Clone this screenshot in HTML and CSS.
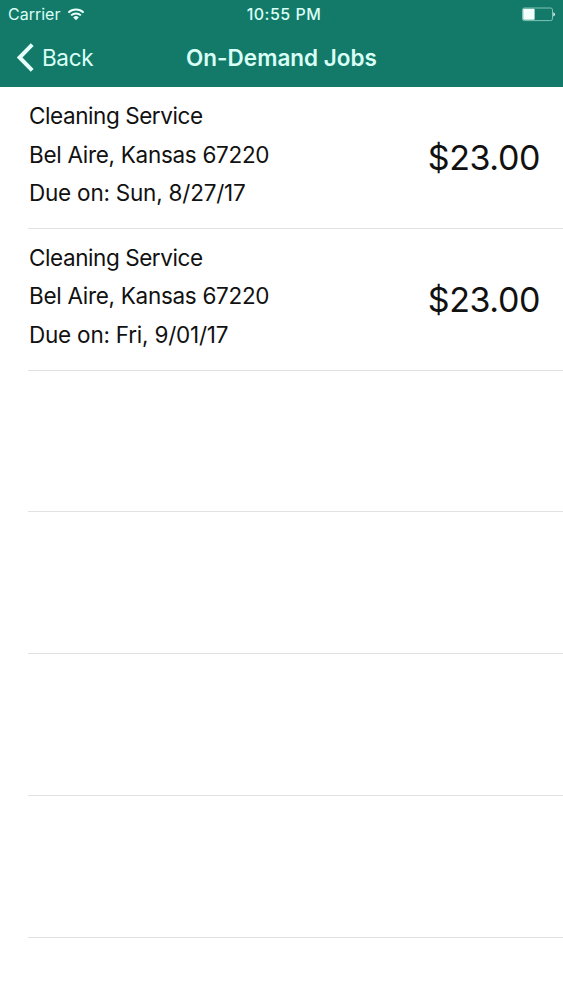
FILE: index.html
```
<!DOCTYPE html>
<html lang="en">
<head>
  <meta charset="utf-8">
  <title>On-Demand Jobs</title>
  <link rel="stylesheet" href="styles.css">
</head>
<body>
  <header class="header">
    <div class="status-bar">
      <div class="carrier">
        <span>Carrier</span>
        <svg class="wifi" width="18" height="13" viewBox="0 0 18 13">
          <path d="M1.4 4.6a11 11 0 0 1 15.2 0" />
          <path d="M4.1 7.4a7.1 7.1 0 0 1 9.8 0" />
          <path class="dot" d="M9 12.2L6.2 9.4a4.1 4.1 0 0 1 5.6 0z" />
        </svg>
      </div>
      <span class="time">10:55 PM</span>
      <svg class="battery" width="34" height="15" viewBox="0 0 34 15">
        <rect class="case" x="1.5" y="1" width="30" height="12.6" rx="1.8" />
        <rect class="charge" x="2.2" y="1.8" width="11.4" height="11" rx="0.8" />
        <path class="charge" d="M32.4 5.2q1.4 .4 1.4 2.1t-1.4 2.1z" />
      </svg>
    </div>
    <nav class="nav-bar">
      <a class="back" href="#">
        <svg width="18" height="29" viewBox="0 0 18 29">
          <path d="M16.2 1.7L3.6 14.5l12.6 12.8" />
        </svg>
        <span>Back</span>
      </a>
      <h1>On-Demand Jobs</h1>
    </nav>
  </header>

  <ul class="jobs">
    <li class="job">
      <div class="info">
        <p class="service">Cleaning Service</p>
        <p class="place">Bel Aire, Kansas 67220</p>
        <p class="due">Due on: Sun, 8/27/17</p>
      </div>
      <span class="price">$23.00</span>
    </li>
    <li class="job">
      <div class="info">
        <p class="service">Cleaning Service</p>
        <p class="place">Bel Aire, Kansas 67220</p>
        <p class="due">Due on: Fri, 9/01/17</p>
      </div>
      <span class="price">$23.00</span>
    </li>
    <li class="job"></li>
    <li class="job"></li>
    <li class="job"></li>
    <li class="job"></li>
  </ul>
</body>
</html>
```

FILE: styles.css
```
* {
  box-sizing: border-box;
}

body {
  margin: 0;
  background: #fff;
  color: #111;
  font-family: Inter, "Liberation Sans", sans-serif;
}

.header {
  height: 87px;
  background: #137a69;
  color: #d9fff6;
}

.status-bar {
  display: grid;
  grid-template-columns: 1fr auto 1fr;
  align-items: center;
  height: 28px;
  padding: 0 8px;
  font-size: 16px;
  line-height: 28px;
}

.carrier {
  display: flex;
  align-items: center;
  gap: 7px;
}

.wifi path {
  fill: none;
  stroke: #e6fffa;
  stroke-width: 2;
}

.wifi .dot {
  fill: #e6fffa;
  stroke: none;
}

.time {
  font-weight: 500;
  letter-spacing: 0.5px;
  margin-left: 5px;
}

.battery {
  justify-self: end;
}

.battery .case {
  fill: none;
  stroke: #7fc4b5;
}

.battery .charge {
  fill: #f2fffc;
}

.nav-bar {
  display: grid;
  grid-template-columns: 1fr auto 1fr;
  align-items: center;
  height: 59px;
  padding: 0 16px 1px;
}

.back {
  display: flex;
  align-items: center;
  gap: 8px;
  color: inherit;
  font-size: 22.5px;
  letter-spacing: -0.35px;
  text-decoration: none;
}

.back path {
  fill: none;
  stroke: #e6fffa;
  stroke-width: 4;
}

h1 {
  margin: 0;
  font-size: 22.5px;
  font-weight: 600;
}

.jobs {
  list-style: none;
  margin: 0;
  padding: 0 0 0 28px;
}

.job {
  display: flex;
  justify-content: space-between;
  height: 141.75px;
  padding: 10px 23px 0 1px;
  border-bottom: 1px solid #e2e2e4;
}

.job p {
  margin: 0;
  font-size: 22.5px;
  line-height: 38.5px;
}

.job .service {
  letter-spacing: -0.43px;
}

.job .place {
  letter-spacing: -0.3px;
}

.job .due {
  letter-spacing: -0.22px;
}

.price {
  margin-top: 39px;
  font-size: 34px;
  letter-spacing: -0.4px;
  line-height: 44px;
}
```
